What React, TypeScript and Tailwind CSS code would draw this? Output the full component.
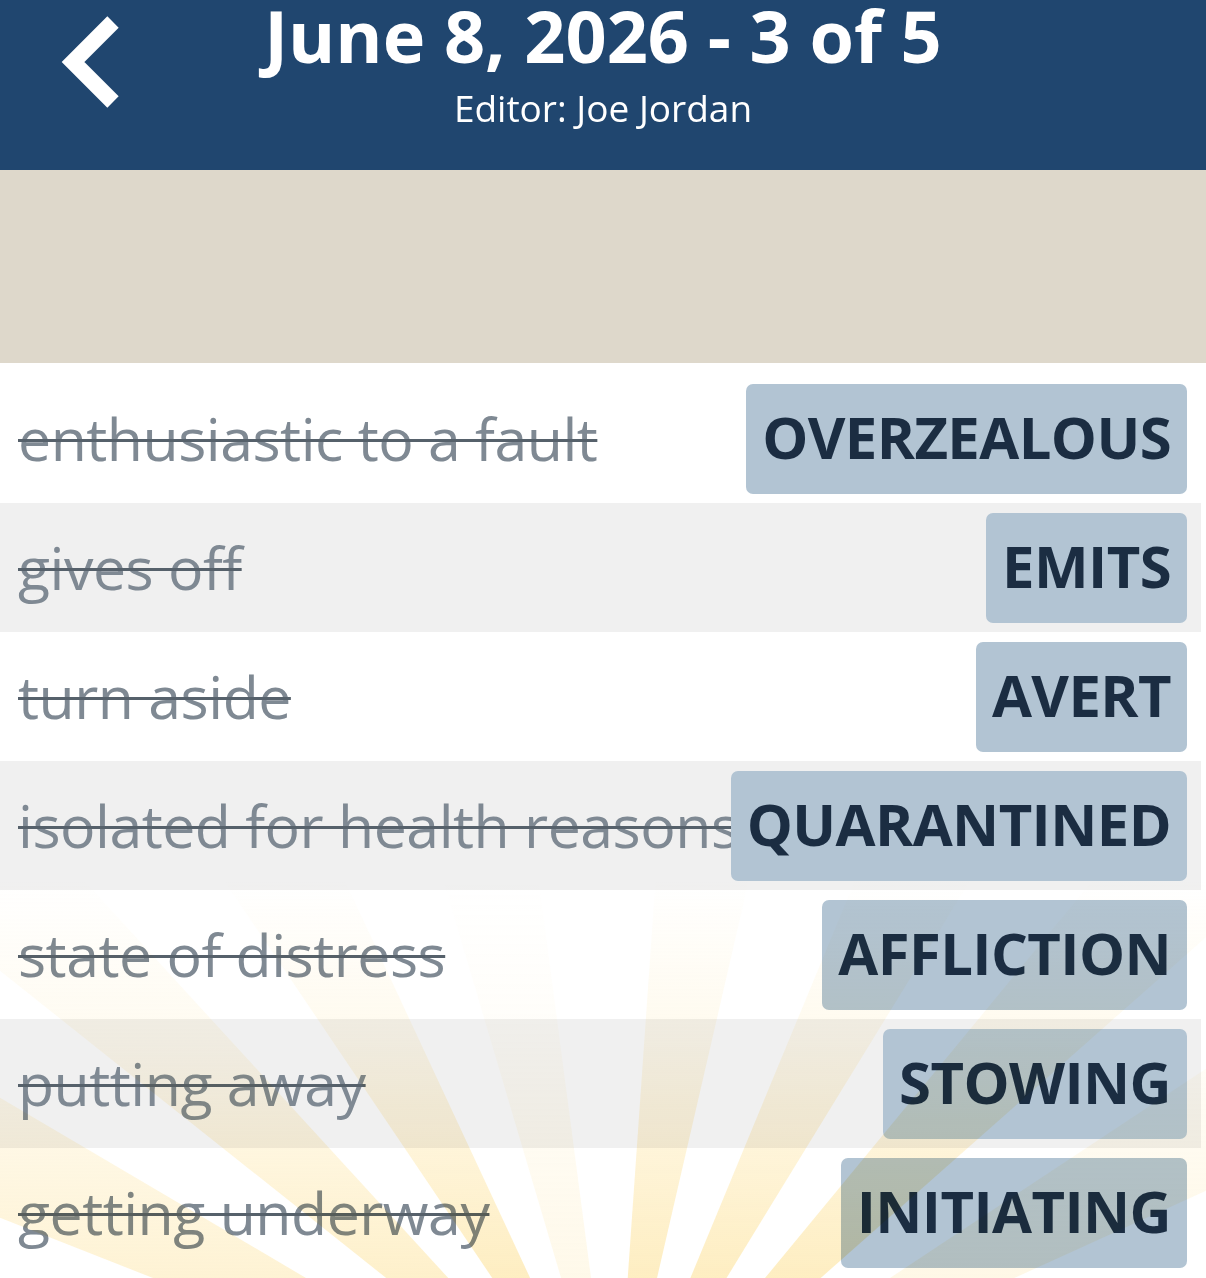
type Entry = {
  clue: string
  answer: string
}

const ENTRIES: Entry[] = [
  { clue: "enthusiastic to a fault", answer: "OVERZEALOUS" },
  { clue: "gives off", answer: "EMITS" },
  { clue: "turn aside", answer: "AVERT" },
  { clue: "isolated for health reasons", answer: "QUARANTINED" },
  { clue: "state of distress", answer: "AFFLICTION" },
  { clue: "putting away", answer: "STOWING" },
  { clue: "getting underway", answer: "INITIATING" },
]

// sunburst behind the solved list, angles measured from straight up
const RAY_CENTER = { x: 615, y: 1460 }
const RAYS = [
  { angle: -64, opacity: 0.7 },
  { angle: -47, opacity: 0.85 },
  { angle: -29.5, opacity: 1 },
  { angle: -12, opacity: 0.35 },
  { angle: 8.5, opacity: 1 },
  { angle: 27, opacity: 1 },
  { angle: 44, opacity: 1 },
  { angle: 61, opacity: 0.4 },
]
const RAY_HALF_DEG = 4.5
const RAY_LEN = 1400

function rayPoints(angle: number) {
  const toXY = (deg: number) => {
    const r = (deg * Math.PI) / 180
    return `${RAY_CENTER.x + Math.sin(r) * RAY_LEN},${RAY_CENTER.y - Math.cos(r) * RAY_LEN}`
  }
  return `${RAY_CENTER.x},${RAY_CENTER.y} ${toXY(angle - RAY_HALF_DEG)} ${toXY(angle + RAY_HALF_DEG)}`
}

function Sunburst() {
  return (
    <svg
      className="pointer-events-none absolute inset-0 mix-blend-multiply"
      width={1206}
      height={1278}
      viewBox="0 0 1206 1278"
      aria-hidden
    >
      <defs>
        <linearGradient id="rayFade" gradientUnits="userSpaceOnUse" x1="0" y1="880" x2="0" y2="1278">
          <stop offset="0" stopColor="#fde39c" stopOpacity="0" />
          <stop offset="0.4" stopColor="#fde39c" stopOpacity="0.18" />
          <stop offset="1" stopColor="#fde39c" stopOpacity="0.62" />
        </linearGradient>
      </defs>
      {RAYS.map((ray) => (
        <polygon
          key={ray.angle}
          points={rayPoints(ray.angle)}
          fill="url(#rayFade)"
          opacity={ray.opacity}
        />
      ))}
    </svg>
  )
}

function BackChevron() {
  return (
    <svg
      className="absolute top-0 left-0"
      width={140}
      height={130}
      viewBox="0 0 140 130"
      aria-hidden
    >
      <polyline
        points="113,22 73,62 113,102"
        fill="none"
        stroke="white"
        strokeWidth={16}
        strokeLinejoin="miter"
      />
    </svg>
  )
}

function EntryRow({ entry, shaded }: { entry: Entry; shaded: boolean }) {
  return (
    <div
      className={
        shaded
          ? "mr-[5px] flex h-[129px] items-center justify-between gap-[4px] bg-[#f0f0f0] pr-[14px] pl-[18px]"
          : "mr-[5px] flex h-[129px] items-center justify-between gap-[4px] bg-white pr-[14px] pl-[18px]"
      }
    >
      <span className="min-w-0 text-[59px] leading-none tracking-[-0.5px] whitespace-nowrap text-[#7f8993] line-through decoration-[#56616b] decoration-[3px]">
        {entry.clue}
      </span>
      <span className="flex h-[110px] shrink-0 items-center rounded-[7px] bg-[#b2c4d3] px-[16px] pb-[4px] text-[58px] leading-none font-bold tracking-[-0.6px] whitespace-nowrap text-[#1b2d42]">
        {entry.answer}
      </span>
    </div>
  )
}

export default function App() {
  return (
    <div className="relative h-[1278px] w-[1206px] overflow-hidden bg-white font-['Open_Sans','Noto_Sans',sans-serif]">
      <header className="relative flex h-[170px] flex-col items-center bg-[#20466f] pt-[5px] text-white">
        <BackChevron />
        <h1 className="text-[72px] leading-[60px] font-bold">June 8, 2026 - 3 of 5</h1>
        <p className="mt-[23px] text-[37px] leading-[40px]">Editor: Joe Jordan</p>
      </header>

      <div className="h-[193px] bg-[#ded8cb]" />

      <div className="pt-[11px]">
        {ENTRIES.map((entry, i) => (
          <EntryRow key={entry.answer} entry={entry} shaded={i % 2 === 1} />
        ))}
      </div>

      <Sunburst />
    </div>
  )
}
